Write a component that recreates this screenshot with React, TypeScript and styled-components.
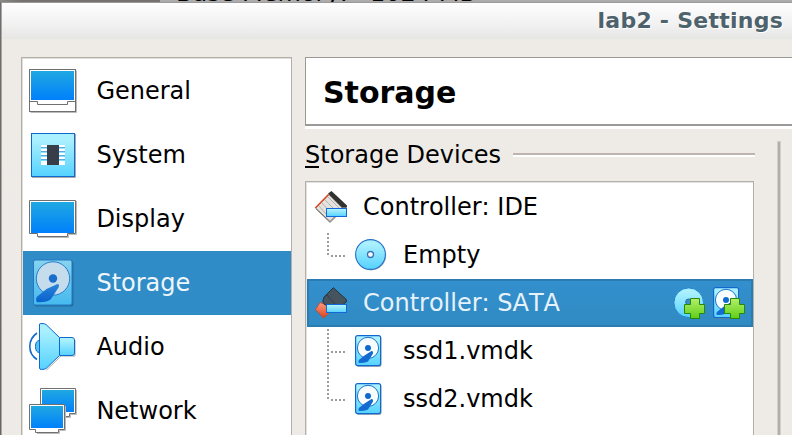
import React from "react";
import styled, { createGlobalStyle } from "styled-components";

const GlobalStyle = createGlobalStyle`
  * { box-sizing: border-box; }
  html, body { margin: 0; height: 100%; overflow: hidden; }
  body { background: #a5a5a5; font-family: "DejaVu Sans", sans-serif; font-size: 24px; font-kerning: none; color: #000; }
  svg { display: block; flex: none; overflow: visible; }
`;

const Screen = styled.div`
  width: 792px;
  height: 435px;
  overflow: hidden;
  display: flex;
  flex-direction: column;
  background: linear-gradient(#6e6e6e, #66666a);
`;
const Backdrop = styled.div`
  height: 2px;
  flex: none;
  display: flex;
  align-items: flex-end;
  overflow: hidden;
  background: linear-gradient(90deg, #8a8984 0, #75736f 20px, #75736f 160px, #acacac 160px);
  padding-left: 176px;
  line-height: 28px;
  white-space: pre;
`;
const BackdropText = styled.span<{ $width: number }>`
  width: ${(p) => p.$width}px;
  flex: none;
  margin-bottom: -5px;
`;
const Window = styled.div`
  flex: 1;
  min-height: 0;
  margin-left: 1px;
  border-top: 1px solid #9b9a99;
  border-left: 1px solid #aaa7a3;
  background: #eeebe6;
  display: flex;
  flex-direction: column;
`;
const TitleBar = styled.div`
  height: 36px;
  flex: none;
  display: flex;
  justify-content: flex-end;
  padding-right: 9px;
  line-height: 35px;
  background: linear-gradient(#fefefe, #f0f0f0 65%, #e6e6e5);
  font-size: 22px;
  font-weight: bold;
  letter-spacing: 0.25px;
  color: #4e626c;
  text-shadow: 1px 1px 0 #fff;
`;
const Content = styled.div`
  flex: 1;
  min-height: 0;
  display: flex;
  gap: 13px;
  padding: 18px 0 0 19px;
`;
const Sidebar = styled.nav`
  width: 271px;
  flex: none;
  border: 1px solid #b3afab;
  border-bottom: 0;
  background: #fff;
  box-shadow: inset 1px 1px #e0ddda;
  padding: 1px 0 0 1px;
`;
const NavItem = styled.div<{ $active?: boolean }>`
  height: 64px;
  display: flex;
  align-items: center;
  gap: 19.4px;
  padding-left: 6px;
  background: ${(p) => (p.$active ? "#308cc6" : "transparent")};
  color: ${(p) => (p.$active ? "#eef6fb" : "#000")};
`;
const Main = styled.main`
  flex: 1;
  min-width: 0;
`;
const PageHeader = styled.h1`
  height: 69px;
  margin: 0;
  padding-left: 17px;
  line-height: 69px;
  font-size: 30px;
  background: #fff;
  border: 1px solid #9b9a97;
  border-width: 1px 0 2px 1px;
  box-shadow: 0 3px #fff;
`;
const Body = styled.div`
  display: flex;
  gap: 23px;
  padding-top: 15px;
`;
const Group = styled.section`
  width: 449px;
  flex: none;
`;
const GroupTitle = styled.div`
  height: 40px;
  display: flex;
  align-items: center;
  gap: 12px;
  line-height: 28px;
  padding-bottom: 12px;
`;
const Mnemonic = styled.span`
  background: linear-gradient(#000, #000) 0 100% / 14px 2px no-repeat;
  display: inline-block;
  height: 26px;
  line-height: 26px;
`;
const Rule = styled.div`
  flex: 1;
  height: 4px;
  margin: 0 -1px 0 0;
  border-top: 2px solid #bdb4af;
  border-bottom: 2px solid #fff;
`;
const Splitter = styled.div`
  width: 4px;
  height: 310px;
  border: 1px solid #d2cecb;
  border-bottom: 0;
  background: #b1adab;
`;
const Tree = styled.div`
  height: 280px;
  background: #fff;
  border: 1px solid #b3b0aa;
  box-shadow: inset 1px 1px #e4e2df;
  padding: 1px 0 0 1px;
`;
const ControllerRow = styled.div<{ $active?: boolean }>`
  height: 48px;
  display: flex;
  align-items: center;
  padding: 0 8px;
  color: ${(p) => (p.$active ? "#e6f2fa" : "#000")};
  background: ${(p) => (p.$active ? "linear-gradient(#3390ce, #308ac2)" : "transparent")};
  box-shadow: ${(p) => (p.$active ? "inset 0 0 0 2px #2b7db1" : "none")};
`;
const ControllerName = styled.span`
  flex: 1;
  margin-left: 16px;
`;
const Actions = styled.div`
  display: flex;
  gap: 8px;
`;
const DeviceRow = styled.div`
  height: 48px;
  display: flex;
  align-items: center;
  padding-left: 20px;
`;
const DeviceName = styled.span`
  margin-left: 16px;
`;

const Gradients = () => (
  <svg width="0" height="0">
    <defs>
      <linearGradient id="screen" x2="0" y2="1"><stop stopColor="#20a8e2" /><stop offset="1" stopColor="#0080fb" /></linearGradient>
      <linearGradient id="cyan" x2="0" y2="1"><stop offset=".15" stopColor="#aaf0ff" /><stop offset="1" stopColor="#55d2ff" /></linearGradient>
      <linearGradient id="drive" x2="0" y2="1"><stop stopColor="#86d3ef" /><stop offset="1" stopColor="#45b9ef" /></linearGradient>
      <linearGradient id="arm" x2="0" y2="1"><stop stopColor="#2a84d8" /><stop offset="1" stopColor="#0862ce" /></linearGradient>
      <linearGradient id="green" x2="0" y2="1"><stop stopColor="#b4ee69" /><stop offset="1" stopColor="#5fcf17" /></linearGradient>
      <linearGradient id="orange" x2="0" y2="1"><stop stopColor="#ff9b80" /><stop offset="1" stopColor="#dc431e" /></linearGradient>
    </defs>
  </svg>
);

const GeneralIcon = () => (
  <svg width="48" height="48">
    <path d="M1.5 45.5H47.5V3.5" fill="none" stroke="#bbb" />
    <rect x=".5" y="2.5" width="46" height="42" fill="#fff" stroke="#707070" />
    <rect x="2" y="4" width="43" height="29" fill="url(#screen)" />
    <path d="M0 34.5H8.5V37.5H38.5V34.5H46" fill="none" stroke="#707070" />
  </svg>
);
const SystemIcon = () => (
  <svg width="48" height="48">
    <path d="M3 46.5H46.5V3" fill="none" stroke="#aaa" />
    <rect x="2.5" y="2.5" width="43" height="43" fill="url(#cyan)" stroke="#1169cd" />
    {[14, 18, 22, 26, 30].map((y) => (
      <g key={y}><path d={`M12 ${y + 1}H36`} stroke="#fff" strokeWidth="2" /><path d={`M12 ${y + 2.5}H36`} stroke="#5ba9df" /></g>
    ))}
    <path d="M12 33H36" stroke="#fff" strokeWidth="2" />
    <rect x="18" y="14" width="12" height="20" fill="#373e49" />
  </svg>
);
const DisplayIcon = () => (
  <svg width="48" height="48">
    <path d="M47.5 6V39.5H39.5V42.5H9" fill="none" stroke="#bbb" />
    <path d="M.5 5.5H46.5V38.5H38.5V41.5H8.5V38.5H.5Z" fill="#fff" stroke="#707070" />
    <rect x="2" y="7" width="43" height="31" fill="url(#screen)" />
  </svg>
);
const StorageIcon = () => (
  <svg width="48" height="48">
    <rect x="5.5" y="2" width="39" height="45.5" rx="2" fill="#256e9c" />
    <rect x="4.5" y="1" width="38.5" height="45" rx="2" fill="url(#drive)" stroke="#2379c4" />
    <circle cx="24" cy="19.5" r="16.7" fill="#c5dcec" stroke="#267dcb" />
    <circle cx="24" cy="19.5" r="4.2" fill="#196dcb" />
    <path d="M28.5 25Q30.8 25.2 29.5 28.5L22 40Q18 43.6 8 43.2Q6 40 8.2 37.5L17.5 30Z" fill="url(#arm)" />
  </svg>
);
const AudioIcon = () => (
  <svg width="48" height="48">
    <path d="M17.5 47L32 33H46V17" fill="none" stroke="#aaa" />
    <path d="M8 10Q.8 15 .8 23.5T8 36.5" fill="none" stroke="#1169cd" strokeWidth="1.6" />
    <path d="M10.5 17.5Q6.5 17.5 6.5 23.5T10.5 29.5" fill="#55c7f3" stroke="#1169cd" />
    <path d="M30.5 14.5H43Q45.5 14.5 45.5 17V30Q45.5 32.5 43 32.5H30.5" fill="url(#cyan)" stroke="#1169cd" />
    <path d="M10.5 1Q10.5.5 13 .5Q15.5.5 17 1.5L30.5 14.5V32.5L17 45.5Q15.5 46.5 12.5 46.5Q10.5 46.5 10.5 45Z" fill="url(#cyan)" stroke="#1169cd" />
  </svg>
);
const NetworkIcon = () => (
  <svg width="48" height="48">
    <path d="M47.5 3V27.5H41.5V30.5H20" fill="none" stroke="#bbb" />
    <path d="M11.5 1.5H46.5V26.5H40.5V29.5H17.5V26.5H11.5Z" fill="#fff" stroke="#707070" />
    <rect x="13" y="3" width="32" height="22" fill="url(#screen)" />
    <path d="M36.5 19V43.5H30.5V46.5H8" fill="none" stroke="#bbb" />
    <path d="M.5 17.5H35.5V42.5H29.5V45.5H6.5V42.5H.5Z" fill="#fff" stroke="#707070" />
    <rect x="2" y="19" width="32" height="22" fill="url(#screen)" />
  </svg>
);

const Minus = () => <rect x="11.5" y="17.5" width="20" height="8" fill="url(#cyan)" stroke="#1169d8" />;
const IdeIcon = () => (
  <svg width="32" height="32">
    <path d="M1 18L15 31.5L31 16L17 2Z" fill="#bbb" stroke="#999" />
    <path d="M.5 17L14 3.5L28 17.5L15 30.5Z" fill="#e4e2df" stroke="#77716c" />
    <path d="M4 15L12 24M7 12L16 22M10 9L19 18M13 6L24 17" stroke="#b5b3b0" />
    <path d="M.3 17L13.5 3.5" stroke="#df4923" strokeWidth="1.5" />
    <path d="M13 2.5L16.5 0L32 14.5V16.5H27Z" fill="#30322f" />
    <Minus />
  </svg>
);
const SataIcon = () => (
  <svg width="32" height="32">
    <path d="M5 15.5L.5 22.5L8.5 31L15 25L12 18Z" fill="url(#orange)" stroke="#c24c36" />
    <path d="M18.3.7L31.3 12.5V15L27 18H10L7.8 14.5L9 10Z" fill="#46545f" stroke="#26343e" />
    <path d="M9 10L12 8L20 17" fill="none" stroke="#303e48" />
    <Minus />
  </svg>
);
const Disc = () => (
  <>
    <circle cx="16.2" cy="16.5" r="15" fill="#999" opacity=".7" />
    <circle cx="15.5" cy="15.5" r="14.9" fill="url(#cyan)" stroke="#256fc7" strokeWidth="1.1" />
    <circle cx="15.5" cy="15.5" r="3" fill="#fff" stroke="#3973b4" strokeWidth="1.3" />
  </>
);
const Drive = () => (
  <>
    <rect x="1.5" y="1.5" width="25" height="30.5" rx="2" fill="#888" opacity=".65" />
    <rect x=".6" y=".6" width="25" height="30" rx="2" fill="url(#cyan)" stroke="#1169cd" strokeWidth="1.2" />
    <circle cx="13" cy="12.9" r="10.6" fill="#f8feff" stroke="#1474cf" />
    <circle cx="13" cy="12.9" r="3" fill="#1169cd" />
    <path d="M16.5 16Q18.5 15.5 18 18.5L13 26.5Q10 28.3 3.5 27.8Q3 25 5.5 23.8L9.5 20.5Z" fill="#116bd0" />
  </>
);
const Plus = () => (
  <path d="M17.5 11.5H26.5V17.5H31.5V26.5H26.5V31.5H17.5V26.5H11.5V17.5H17.5Z" fill="url(#green)" stroke="#25880b" />
);
const DiscIcon = () => <svg width="32" height="32"><Disc /></svg>;
const DriveIcon = () => <svg width="32" height="32"><Drive /></svg>;
const AddDiscIcon = () => (
  <svg width="32" height="32">
    <circle cx="15.7" cy="15.7" r="14.8" fill="url(#cyan)" stroke="#2386cf" />
    <circle cx="15.7" cy="15" r="3" fill="#3a91c6" stroke="#23699b" />
    <Plus />
  </svg>
);
const AddDriveIcon = () => <svg width="32" height="32"><Drive /><Plus /></svg>;

const Branch = ({ last }: { last?: boolean }) => (
  <svg width="20" height="48">
    <path d={`M1 2V${last ? 26 : 48}`} stroke="#9c9c9c" strokeWidth="2" strokeDasharray="2 2" />
    <path d="M4 25H20" stroke="#9c9c9c" strokeWidth="2" strokeDasharray="2 2" />
  </svg>
);
const BranchGap = styled.span`
  width: 8px;
  flex: none;
`;
const Device = ({ name, icon, last }: { name: string; icon: React.ReactNode; last?: boolean }) => (
  <DeviceRow>
    <Branch last={last} />
    <BranchGap />
    {icon}
    <DeviceName>{name}</DeviceName>
  </DeviceRow>
);

const sections = [
  { name: "General", Icon: GeneralIcon },
  { name: "System", Icon: SystemIcon },
  { name: "Display", Icon: DisplayIcon },
  { name: "Storage", Icon: StorageIcon },
  { name: "Audio", Icon: AudioIcon },
  { name: "Network", Icon: NetworkIcon },
];

export default function App() {
  return (
    <Screen>
      <GlobalStyle />
      <Backdrop>
        <BackdropText $width={194}>Base Memory:</BackdropText>
        <BackdropText $width={110}>1024 MB</BackdropText>
      </Backdrop>
      <Window>
        <TitleBar>lab2 - Settings</TitleBar>
        <Content>
          <Sidebar>
            {sections.map(({ name, Icon }) => (
              <NavItem key={name} $active={name === "Storage"}>
                <Icon />
                <span>{name}</span>
              </NavItem>
            ))}
          </Sidebar>
          <Main>
            <PageHeader>Storage</PageHeader>
            <Body>
              <Group>
                <GroupTitle>
                  <span><Mnemonic>S</Mnemonic>torage Devices</span>
                  <Rule />
                </GroupTitle>
                <Tree>
                  <ControllerRow><IdeIcon /><ControllerName>Controller: IDE</ControllerName></ControllerRow>
                  <Device name="Empty" icon={<DiscIcon />} last />
                  <ControllerRow $active>
                    <SataIcon />
                    <ControllerName>Controller: SATA</ControllerName>
                    <Actions><AddDiscIcon /><AddDriveIcon /></Actions>
                  </ControllerRow>
                  <Device name="ssd1.vmdk" icon={<DriveIcon />} />
                  <Device name="ssd2.vmdk" icon={<DriveIcon />} last />
                </Tree>
              </Group>
              <Splitter />
            </Body>
          </Main>
        </Content>
      </Window>
      <Gradients />
    </Screen>
  );
}
